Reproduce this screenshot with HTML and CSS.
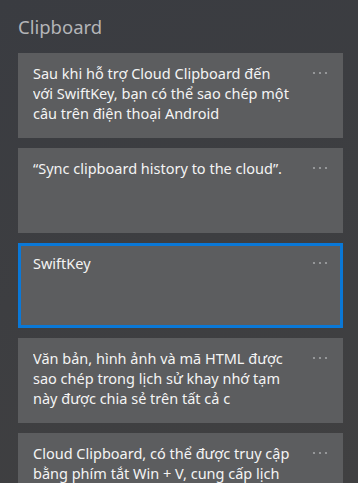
FILE: index.html
```html
<!DOCTYPE html>
<html lang="vi">
<head>
  <meta charset="UTF-8" />
  <title>Clipboard</title>
  <link rel="stylesheet" href="styles.css">
</head>
<body>
  <div class="panel">
    <h1 class="title">Clipboard</h1>

    <div class="clip">
      <p class="clip-text">Sau khi hỗ trợ Cloud Clipboard đến<br>với SwiftKey, bạn có thể sao chép một câu trên điện thoại Android</p>
      <svg class="more" width="16" height="4" viewBox="0 0 16 4"><circle cx="2" cy="2" r="1.1"/><circle cx="8" cy="2" r="1.1"/><circle cx="14" cy="2" r="1.1"/></svg>
    </div>

    <div class="clip">
      <p class="clip-text">“Sync clipboard history to the cloud”.</p>
      <svg class="more" width="16" height="4" viewBox="0 0 16 4"><circle cx="2" cy="2" r="1.1"/><circle cx="8" cy="2" r="1.1"/><circle cx="14" cy="2" r="1.1"/></svg>
    </div>

    <div class="clip selected">
      <p class="clip-text">SwiftKey</p>
      <svg class="more" width="16" height="4" viewBox="0 0 16 4"><circle cx="2" cy="2" r="1.1"/><circle cx="8" cy="2" r="1.1"/><circle cx="14" cy="2" r="1.1"/></svg>
    </div>

    <div class="clip">
      <p class="clip-text">Văn bản, hình ảnh và mã HTML được sao chép trong lịch sử khay nhớ tạm này được chia sẻ trên tất cả c</p>
      <svg class="more" width="16" height="4" viewBox="0 0 16 4"><circle cx="2" cy="2" r="1.1"/><circle cx="8" cy="2" r="1.1"/><circle cx="14" cy="2" r="1.1"/></svg>
    </div>

    <div class="clip">
      <p class="clip-text">Cloud Clipboard, có thể được truy cập bằng phím tắt Win + V, cung cấp lịch</p>
      <svg class="more" width="16" height="4" viewBox="0 0 16 4"><circle cx="2" cy="2" r="1.1"/><circle cx="8" cy="2" r="1.1"/><circle cx="14" cy="2" r="1.1"/></svg>
    </div>
  </div>
</body>
</html>
```

FILE: styles.css
```css
html, body {
  margin: 0;
  height: 100%;
}
body {
  font-family: "Noto Sans", "Open Sans", sans-serif;
  background: linear-gradient(160deg, #3a3c41 0%, #3d3e41 50%, #404041 100%);
  overflow: hidden;
}
.panel {
  padding: 12px 15px 0 18px;
  display: flex;
  flex-direction: column;
  gap: 10px;
}
.title {
  margin: 0 0 1px;
  font-size: 18.5px;
  font-weight: 400;
  line-height: 30px;
  color: #b4b5b8;
}
.clip {
  height: 85px;
  box-sizing: border-box;
  background: #5c5d5f;
  padding: 10px 15px 0 15px;
  display: flex;
  align-items: flex-start;
  overflow: hidden;
  flex-shrink: 0;
}
.clip.selected {
  box-shadow: inset 0 0 0 3px #0a78d7;
}
.clip-text {
  margin: 0;
  flex: 1;
  max-width: 265px;
  font-size: 14.5px;
  line-height: 20px;
  color: #f4f4f4;
  max-height: 60px;
  overflow: hidden;
}
.more {
  margin-left: auto;
  margin-top: 8px;
  fill: #a4a5a7;
}
```
